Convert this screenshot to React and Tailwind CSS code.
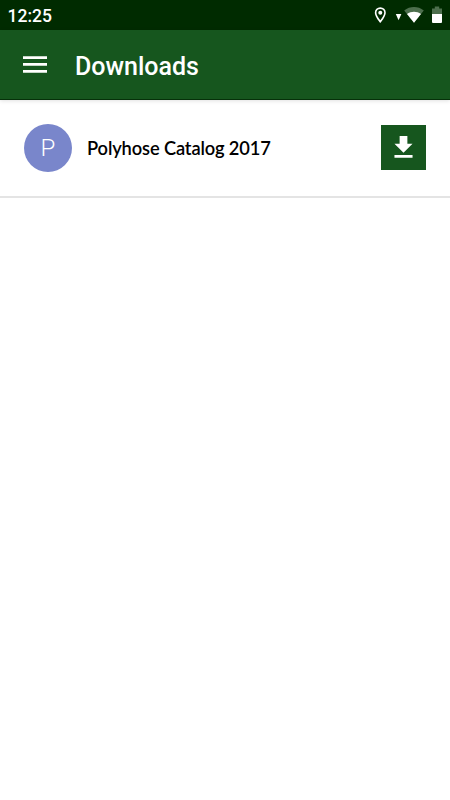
const downloads = [
    { id: 1, title: 'Polyhose Catalog 2017' },
];

function StatusBar() {
    return (
        <div className="flex h-[30px] items-center justify-between bg-[#002b00] pl-[7.5px] text-white">
            <span className="pt-0.5 font-['Roboto',sans-serif] text-[17.5px] font-medium">12:25</span>
            <svg width="80" height="30" viewBox="370 0 80 30" fill="#fff">
                <path
                    fillRule="evenodd"
                    d="M380.3 7.2a5.5 5.5 0 0 0-5.5 5.6c0 4.1 5.5 10.2 5.5 10.2s5.5-6.1 5.5-10.2a5.5 5.5 0 0 0-5.5-5.6zm0 1.7a3.9 3.9 0 0 1 3.9 3.9c0 2.2-2.2 5.3-3.9 7.5-1.7-2.2-3.9-5.3-3.9-7.5a3.9 3.9 0 0 1 3.9-3.9z"
                />
                <circle cx="380.3" cy="12.8" r="2" />
                <path d="M395.8 14h5.6l-2.8 6.2z" />
                <path fill="#4d6f4d" d="M414 22.7l-9.8-12.2c5.8-4.6 13.8-4.6 19.6 0z" />
                <path d="M414 22.7l-7-8.8c4.2-2.8 9.8-2.8 14 0z" />
                <path fill="#4d6f4d" d="M434.8 6.5h4.4v2h2.8v6h-10v-6h2.8z" />
                <path d="M432 14h10v8a1 1 0 0 1-1 1h-8a1 1 0 0 1-1-1z" />
            </svg>
        </div>
    );
}

function Header() {
    return (
        <header className="flex h-[70px] items-center border-b border-[#06310a] bg-[#16561e] pl-[23px] text-white shadow-[0_1px_4px_rgba(0,0,0,0.12)]">
            <button type="button" aria-label="Menu" className="mr-[28px]">
                <svg width="24" height="17" viewBox="0 0 24 17" fill="#fff">
                    <path d="M0 0.2h24v2.7H0zM0 7h24v2.8H0zM0 14h24v2.7H0z" />
                </svg>
            </button>
            <h1 className="pt-[5px] font-['Roboto',sans-serif] text-[25px] font-medium">Downloads</h1>
        </header>
    );
}

function DownloadRow({ title }) {
    return (
        <li className="flex h-[98px] items-center border-b-2 border-[#e4e4e4] px-6">
            <div className="flex size-12 items-center justify-center rounded-full bg-[#7986cb] font-['Roboto',sans-serif] text-2xl font-light text-white">
                {title[0]}
            </div>
            <span className="ml-[15px] flex-1 pt-0.5 font-['Lato',sans-serif] text-[18.3px] font-semibold tracking-[-0.13px] text-black">{title}</span>
            <button type="button" aria-label="Download" className="mb-px flex size-[45px] items-center justify-center bg-[#16561e]">
                <svg width="31" height="31" viewBox="0 0 24 24" fill="#fff">
                    <path d="M19 9h-4V3H9v6H5l7 7 7-7zM5 17.8v2.2h14v-2.2H5z" />
                </svg>
            </button>
        </li>
    );
}

export default function App() {
    return (
        <div className="min-h-screen bg-white">
            <StatusBar />
            <Header />
            <ul>
                {downloads.map((item) => (
                    <DownloadRow key={item.id} title={item.title} />
                ))}
            </ul>
        </div>
    );
}
